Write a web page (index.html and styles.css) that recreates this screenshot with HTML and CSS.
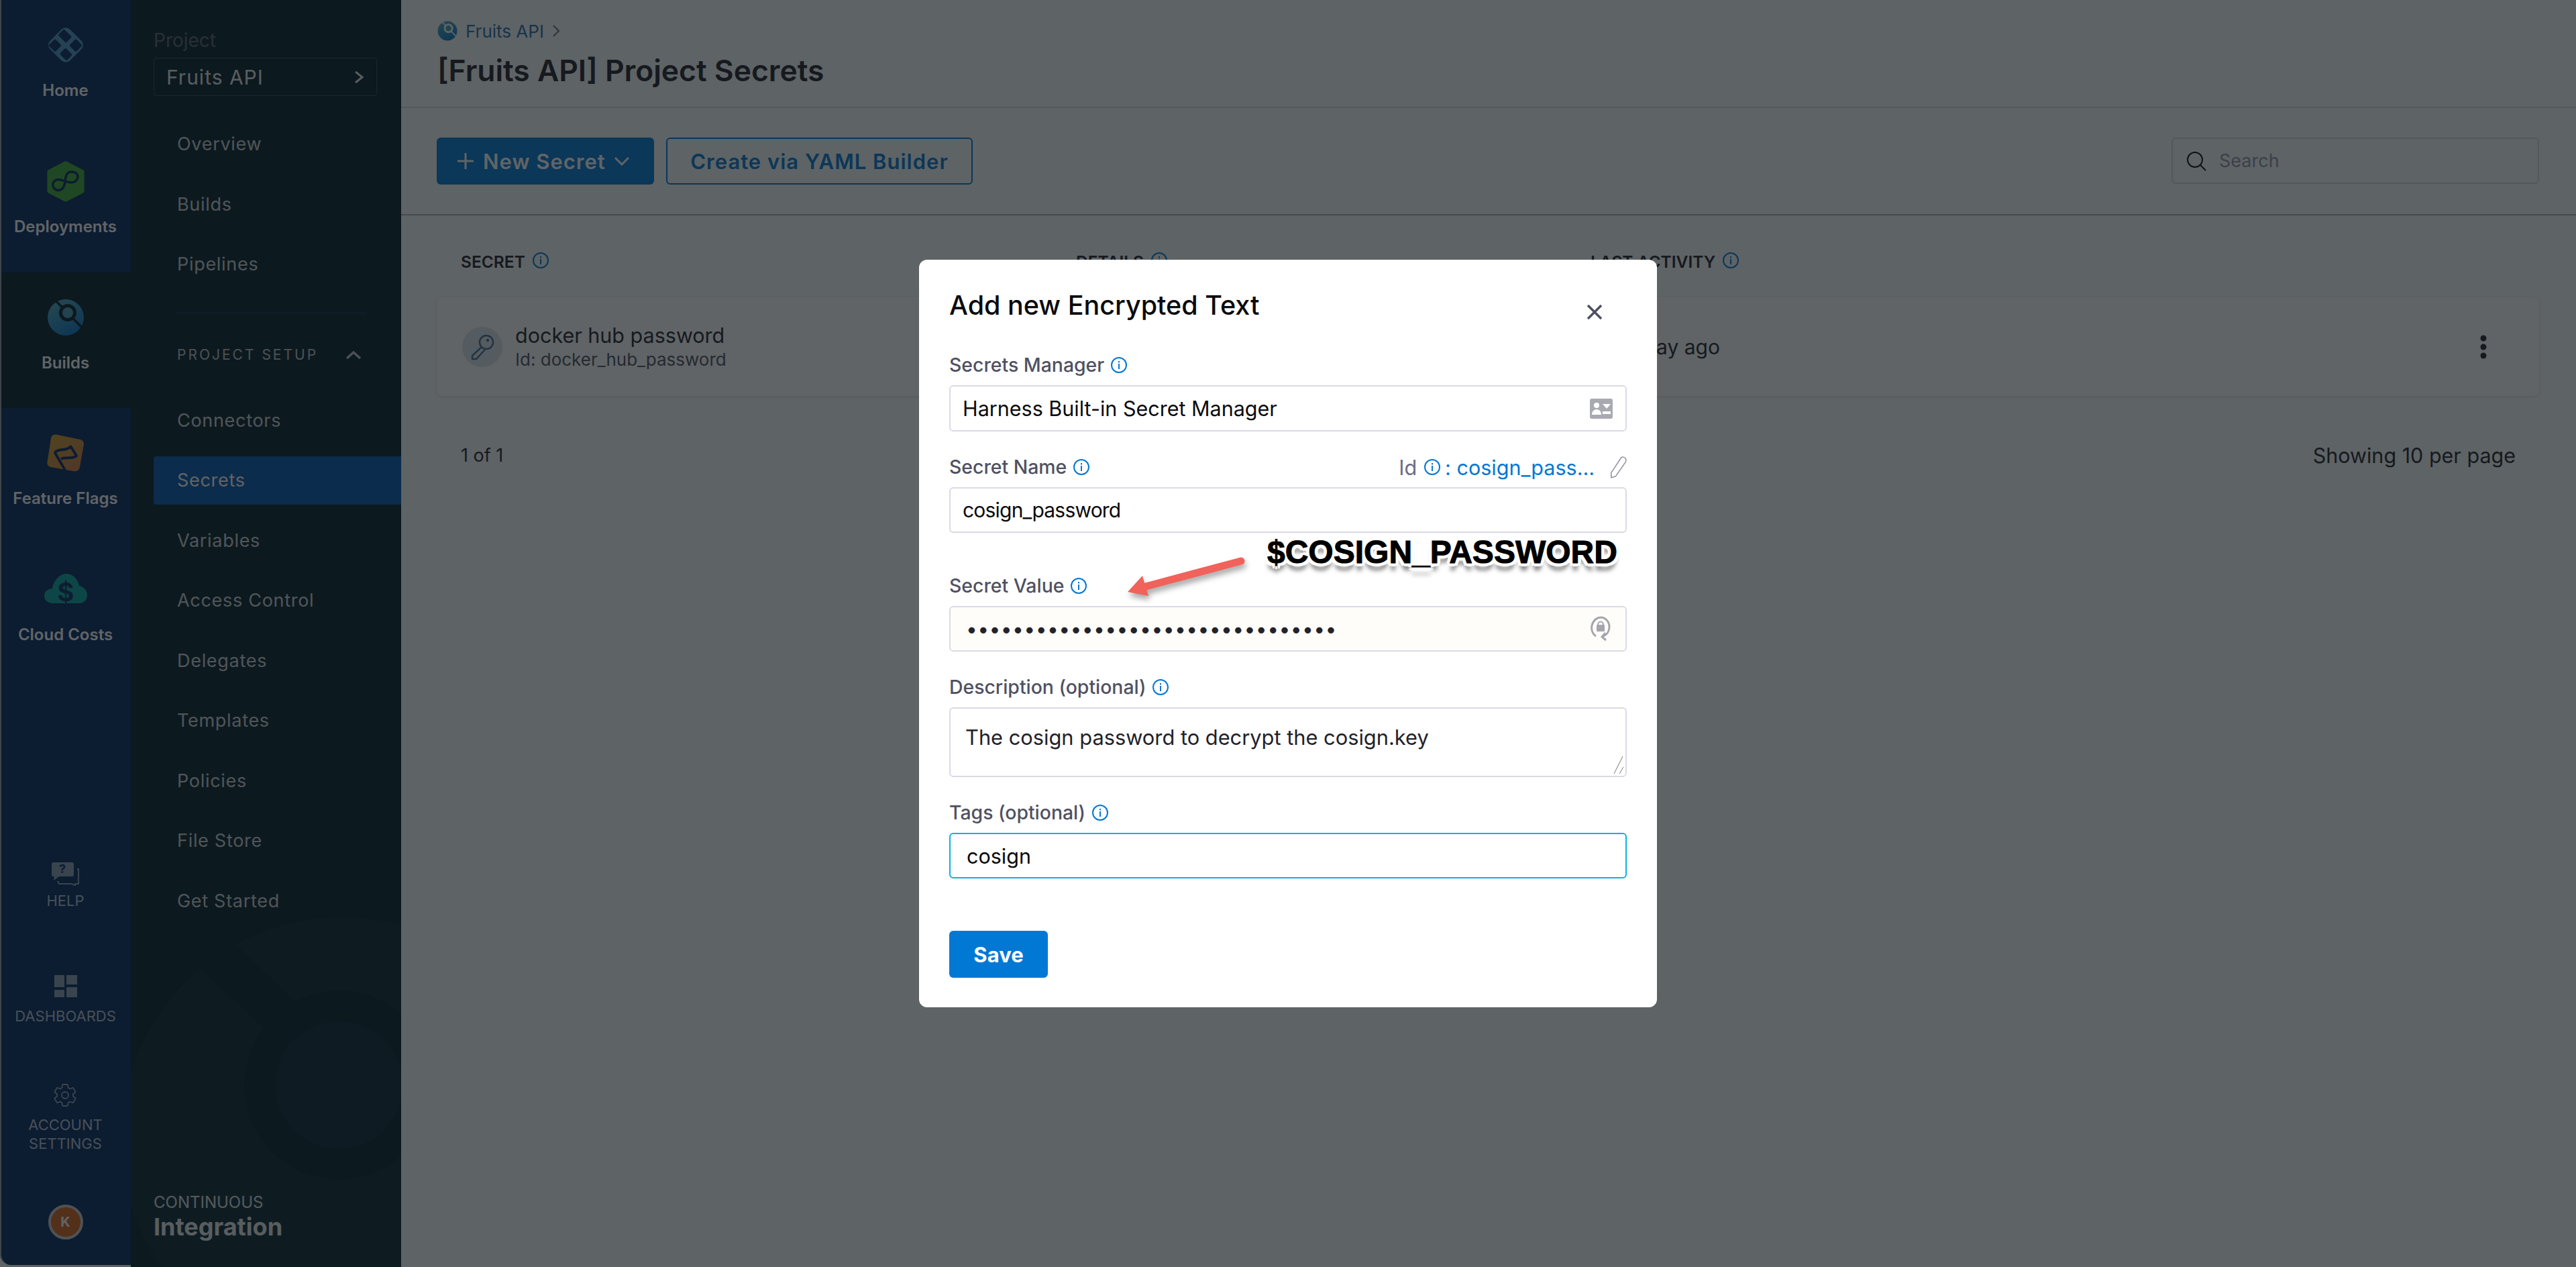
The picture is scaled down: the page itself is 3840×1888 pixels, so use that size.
FILE: index.html
```html
<!DOCTYPE html>
<html>
<head>
  <meta charset="UTF-8" />
  <title>[Fruits API] Project Secrets</title>
  <link rel="stylesheet" href="styles.css">
</head>
<body>
  <svg class="defs" width="0" height="0">
    <symbol id="info" viewBox="0 0 26 26">
      <circle cx="13" cy="13" r="11" fill="none" stroke="currentColor" stroke-width="2" />
      <rect x="12" y="11" width="2" height="8" fill="currentColor" />
      <rect x="12" y="7" width="2" height="2.4" fill="currentColor" />
    </symbol>
  </svg>
  <div class="app">
    <nav class="nav">
      <a class="nav-item">
        <svg class="nav-icon" width="66" height="66" viewBox="42 44 198 198">
          <rect x="78" y="80" width="126" height="126" rx="28" fill="#5098c8" transform="rotate(45 141 143)" />
          <g fill="#052760">
            <rect x="115" y="85" width="50" height="38" rx="6" transform="rotate(45 140 100)" />
            <rect x="72" y="124" width="42" height="42" rx="6" transform="rotate(45 93 145)" />
            <rect x="165" y="124" width="42" height="42" rx="6" transform="rotate(45 186 145)" />
            <rect x="118" y="165" width="44" height="38" rx="6" transform="rotate(45 140 187)" />
          </g>
        </svg>
        <span>Home</span>
      </a>
      <a class="nav-item">
        <svg class="nav-icon" width="56" height="60" viewBox="60 65 162 175">
          <path d="M141 75 L212 112 V195 L141 232 L70 195 V112 Z" fill="#3fa838" stroke="#3fa838" stroke-width="18" stroke-linejoin="round" />
          <path d="M110 145 C125 145 140 158 165 158 C182 158 193 145 193 133 C193 120 180 112 165 112 C150 112 142 125 140 140 C138 160 135 190 110 192 C95 192 85 180 85 168 C85 155 97 145 110 145 Z" fill="none" stroke="#052760" stroke-width="10" />
        </svg>
        <span>Deployments</span>
      </a>
      <a class="nav-item active">
        <svg class="nav-icon" width="56" height="56" viewBox="0 0 56 56">
          <defs>
            <linearGradient id="ci" x1="0" y1="0" x2="0.6" y2="1">
              <stop offset="0" stop-color="#58b0c0" />
              <stop offset="1" stop-color="#0a78c8" />
            </linearGradient>
          </defs>
          <circle cx="28" cy="28" r="27" fill="url(#ci)" />
          <path d="M13 3 L52 43" stroke="#051e2b" stroke-width="3.5" />
          <circle cx="31" cy="21" r="10.5" fill="#4a9cb8" stroke="#051e2b" stroke-width="5" />
        </svg>
        <span>Builds</span>
      </a>
      <a class="nav-item">
        <svg class="nav-icon" width="58" height="58" viewBox="50 45 180 180">
          <defs>
            <linearGradient id="ff" x1="0" y1="0" x2="1" y2="1">
              <stop offset="0" stop-color="#d0a024" />
              <stop offset="1" stop-color="#d0784c" />
            </linearGradient>
          </defs>
          <path d="M95 50 L205 72 C220 75 226 85 223 100 L205 200 C203 215 190 222 175 219 L70 200 C58 195 52 188 55 175 L72 65 C75 55 85 49 95 50 Z" fill="url(#ff)" />
          <path d="M143 225 L92 137 C90 130 93 127 100 125 C120 115 145 125 163 105 L190 148 C170 165 140 152 118 162" fill="none" stroke="#052760" stroke-width="12" stroke-linejoin="round" />
        </svg>
        <span>Feature Flags</span>
      </a>
      <a class="nav-item">
        <svg class="nav-icon" width="64" height="46" viewBox="0 0 64 46">
          <path d="M14 44 C4 44 0 38 0 33 C0 26 6 22 12 22 C14 9 24 0 33 0 C43 0 50 8 52 18 C59 19 64 25 64 32 C64 39 59 44 52 44 Z" fill="#08a4a0" />
          <text x="32" y="41" class="cloud-dollar">$</text>
        </svg>
        <span>Cloud Costs</span>
      </a>
      <div class="nav-bottom">
        <a class="nav-tool tool-help">
          <svg width="42" height="36" viewBox="0 0 42 36">
            <path d="M3 1 H32 C33 1 34 2 34 3 V20 C34 21 33 22 32 22 H12 L4 28 L5 22 H3 C2 22 1 21 1 20 V3 C1 2 2 1 3 1 Z" fill="#8aa0b8" />
            <path d="M39 11 H41 V33 H36 V36 L31 33 H12 L10 29" fill="none" stroke="#8aa0b8" stroke-width="2" />
            <text x="17" y="17" class="help-mark">?</text>
          </svg>
          <span>HELP</span>
        </a>
        <a class="nav-tool tool-dash">
          <span class="dash-grid"><i></i><i></i><i></i><i></i></span>
          <span>DASHBOARDS</span>
        </a>
        <a class="nav-tool tool-settings">
          <svg width="40" height="40" viewBox="0 0 24 24">
            <path d="M19.14 12.94c.04-.3.06-.61.06-.94 0-.32-.02-.64-.07-.94l2.03-1.58c.18-.14.23-.41.12-.61l-1.92-3.32c-.12-.22-.37-.29-.59-.22l-2.39.96c-.5-.38-1.03-.7-1.62-.94l-.36-2.54c-.04-.24-.24-.41-.48-.41h-3.84c-.24 0-.43.17-.47.41l-.36 2.54c-.59.24-1.13.57-1.62.94l-2.39-.96c-.22-.08-.47 0-.59.22L2.74 8.87c-.12.21-.08.47.12.61l2.03 1.58c-.05.3-.09.63-.09.94s.02.64.07.94l-2.03 1.58c-.18.14-.23.41-.12.61l1.92 3.32c.12.22.37.29.59.22l2.39-.96c.5.38 1.03.7 1.62.94l.36 2.54c.05.24.24.41.48.41h3.84c.24 0 .44-.17.47-.41l.36-2.54c.59-.24 1.13-.56 1.62-.94l2.39.96c.22.08.47 0 .59-.22l1.92-3.32c.12-.22.07-.47-.12-.61l-2.01-1.58z" fill="none" stroke="#8aa0b8" stroke-width="1.1" />
            <circle cx="12" cy="12" r="3" fill="none" stroke="#8aa0b8" stroke-width="1.1" />
          </svg>
          <span>ACCOUNT<br>SETTINGS</span>
        </a>
        <div class="avatar">K</div>
      </div>
    </nav>

    <aside class="side">
      <svg class="side-bg" width="403" height="530" viewBox="0 0 403 530">
        <defs>
          <clipPath id="disc"><circle cx="315" cy="339" r="330" /></clipPath>
        </defs>
        <g clip-path="url(#disc)">
          <rect width="403" height="530" fill="#0a2835" />
          <path d="M90 30 L260 190" stroke="#051e2b" stroke-width="62" />
          <circle cx="310" cy="259" r="118" fill="#092633" stroke="#051e2b" stroke-width="46" />
        </g>
      </svg>
      <div class="project-label">Project</div>
      <div class="project-picker">
        <span>Fruits API</span>
        <svg width="16" height="22" viewBox="0 0 16 22"><path d="M3 3 L13 11 L3 19" fill="none" stroke="#fff" stroke-width="3" /></svg>
      </div>
      <ul class="side-list first">
        <li>Overview</li>
        <li>Builds</li>
        <li>Pipelines</li>
      </ul>
      <div class="side-divider"></div>
      <div class="side-group">
        <span>PROJECT SETUP</span>
        <svg width="24" height="14" viewBox="0 0 24 14"><path d="M2 12 L12 3 L22 12" fill="none" stroke="#fff" stroke-width="3.5" /></svg>
      </div>
      <ul class="side-list">
        <li>Connectors</li>
        <li class="selected">Secrets</li>
        <li>Variables</li>
        <li>Access Control</li>
        <li>Delegates</li>
        <li>Templates</li>
        <li>Policies</li>
        <li>File Store</li>
        <li>Get Started</li>
      </ul>
      <div class="module-name">
        <div class="module-top">CONTINUOUS</div>
        <div class="module-main">Integration</div>
      </div>
    </aside>

    <main class="main">
      <header class="page-head">
        <div class="crumb">
          <svg width="30" height="30" viewBox="0 0 56 56">
            <circle cx="28" cy="28" r="27" fill="url(#ci)" />
            <path d="M13 3 L52 43" stroke="#fff" stroke-width="3.5" />
            <circle cx="31" cy="21" r="10.5" fill="#4a9cb8" stroke="#fff" stroke-width="5" />
          </svg>
          <span>Fruits API</span>
          <svg width="12" height="20" viewBox="0 0 12 20"><path d="M2 2 L10 10 L2 18" fill="none" stroke="#6b6d85" stroke-width="2" /></svg>
        </div>
        <h1>[Fruits API] Project Secrets</h1>
      </header>
      <div class="toolbar">
        <button class="btn-primary">
          <svg width="28" height="28" viewBox="0 0 28 28"><path d="M14 2 V26 M2 14 H26" stroke="#fff" stroke-width="3" /></svg>
          <span>New Secret</span>
          <svg width="24" height="14" viewBox="0 0 24 14"><path d="M2 2 L12 12 L22 2" fill="none" stroke="#fff" stroke-width="3" /></svg>
        </button>
        <button class="btn-outline">Create via YAML Builder</button>
        <div class="search">
          <svg width="32" height="32" viewBox="0 0 32 32">
            <circle cx="14" cy="14" r="11" fill="none" stroke="#0b0c12" stroke-width="2" />
            <path d="M22 22 L30 30" stroke="#0b0c12" stroke-width="2" />
          </svg>
          <span>Search</span>
        </div>
      </div>
      <section class="content">
        <div class="table-head">
          <div class="col-a">SECRET <svg class="info" width="26" height="26"><use href="#info" /></svg></div>
          <div class="col-b">DETAILS <svg class="info" width="26" height="26"><use href="#info" /></svg></div>
          <div class="col-c">LAST ACTIVITY <svg class="info" width="26" height="26"><use href="#info" /></svg></div>
        </div>
        <div class="row-card">
          <div class="key-badge">
            <svg width="36" height="40" viewBox="0 0 36 40">
              <circle cx="24" cy="13" r="10" fill="none" stroke="#4a6a90" stroke-width="2.4" />
              <circle cx="26" cy="10" r="2.2" fill="#4a6a90" />
              <path d="M17 20 L3 33 L3 38 L9 38 L22 24" fill="none" stroke="#4a6a90" stroke-width="2.4" />
            </svg>
          </div>
          <div class="row-name">
            <div class="row-title">docker hub password</div>
            <div class="row-id">Id: docker_hub_password</div>
          </div>
          <div class="row-activity">1 day ago</div>
          <svg class="row-menu" width="12" height="36" viewBox="0 0 12 36">
            <circle cx="6" cy="5" r="4.5" /><circle cx="6" cy="18" r="4.5" /><circle cx="6" cy="31" r="4.5" />
          </svg>
        </div>
        <div class="pager">
          <span>1 of 1</span>
          <span class="pager-size">Showing 10 per page</span>
        </div>
      </section>
    </main>
  </div>

  <div class="backdrop"></div>
  <div class="modal-wrap">
    <div class="modal">
      <div class="modal-head">
        <h2>Add new Encrypted Text</h2>
        <svg class="modal-close" width="26" height="26" viewBox="0 0 26 26"><path d="M3 3 L23 23 M23 3 L3 23" stroke="#4f5162" stroke-width="3.6" /></svg>
      </div>

      <div class="field-label">Secrets Manager <svg class="info-sm" width="26" height="26"><use href="#info" /></svg></div>
      <div class="input input-manager">
        <span>Harness Built-in Secret Manager</span>
        <svg width="36" height="32" viewBox="0 0 36 32">
          <rect x="1" y="1" width="34" height="30" rx="3" fill="#a9a9b2" />
          <circle cx="11" cy="11" r="4" fill="#fff" />
          <path d="M4 25 C4 19 8 17 11 17 C14 17 18 19 18 25 Z" fill="#fff" />
          <path d="M20 9 H32 L26 16 Z M20 20 H32 V24 H20 Z" fill="#fff" />
        </svg>
      </div>

      <div class="label-row">
        <div class="field-label">Secret Name <svg class="info-sm" width="26" height="26"><use href="#info" /></svg></div>
        <div class="id-edit">
          <span class="id-label">Id</span>
          <svg class="info-sm" width="26" height="26"><use href="#info" /></svg>
          <span class="id-value">: cosign_pass...</span>
          <svg class="id-pencil" width="26" height="34" viewBox="0 0 28 36">
            <path d="M19 3 C21 1 24 2 26 4 C27 6 27 8 26 10 L10 33 L3 35 L3 27 Z" fill="none" stroke="#8c8d9e" stroke-width="1.6" />
          </svg>
        </div>
      </div>
      <div class="input input-name"><span>cosign_password</span></div>

      <div class="field-label">Secret Value <svg class="info-sm" width="26" height="26"><use href="#info" /></svg></div>
      <div class="input input-secret">
        <span class="dots">••••••••••••••••••••••••••••••••</span>
        <svg width="30" height="38" viewBox="0 0 30 38">
          <path d="M8 30 C2 26 1 19 2 14 C4 6 10 2 15 2 C23 2 28 9 28 16 C28 23 24 28 19 30" fill="none" stroke="#a5a5ae" stroke-width="3" />
          <path d="M22 25 L17 31 L23 36" fill="none" stroke="#a5a5ae" stroke-width="3" />
          <rect x="9" y="13" width="12" height="10" rx="1" fill="#a5a5ae" />
          <path d="M11 13 C11 7 19 7 19 13" fill="none" stroke="#a5a5ae" stroke-width="2" />
        </svg>
      </div>

      <div class="field-label">Description (optional) <svg class="info-sm" width="26" height="26"><use href="#info" /></svg></div>
      <div class="input textarea">
        <span>The cosign password to decrypt the cosign.key</span>
        <svg class="resizer" width="16" height="28" viewBox="0 0 16 28"><path d="M14 1 L1 27 M15 17 L9 27" stroke="#777" stroke-width="1" /></svg>
      </div>

      <div class="field-label">Tags (optional) <svg class="info-sm" width="26" height="26"><use href="#info" /></svg></div>
      <div class="input input-tags"><span>cosign</span></div>

      <button class="btn-save">Save</button>

      <svg class="note-arrow" width="200" height="90" viewBox="0 0 200 90">
        <path d="M34 58 L180 19" stroke="#f0625a" stroke-width="11" stroke-linecap="round" />
        <path d="M11 65 L33 41 L38 58 L42 71 Z" fill="#f0625a" />
      </svg>
      <div class="note-text">$COSIGN_PASSWORD</div>
    </div>
  </div>
</body>
</html>
```

FILE: styles.css
```css
* {
  box-sizing: border-box;
}
html, body {
  margin: 0;
  height: 100%;
}
body {
  font-family: Inter, "Liberation Sans", sans-serif;
  background: #fafbfc;
  color: #22222a;
  overflow: hidden;
}
.defs {
  position: absolute;
}
.app {
  display: flex;
  height: 1888px;
}

/* left nav */
.nav {
  width: 195px;
  flex: none;
  display: flex;
  flex-direction: column;
  margin-bottom: 3px;
  background: #052760;
  border-left: 2px solid #9aa0a8;
  border-bottom-left-radius: 16px;
  color: #fff;
  position: relative;
  z-index: 1;
}
.nav-item {
  height: 202.8px;
  flex: none;
  display: flex;
  flex-direction: column;
  align-items: center;
  padding: 32px 2px 0 0;
  font-size: 24px;
  font-weight: 600;
}
.nav-item.active {
  background: #051e2b;
}
.nav-icon {
  height: 70px;
  margin-bottom: 18px;
}
.cloud-dollar {
  font: 700 38px Inter, sans-serif;
  fill: #0a2b63;
  text-anchor: middle;
}
.nav-bottom {
  margin-top: auto;
  padding: 0 2px 38px 0;
  display: flex;
  flex-direction: column;
  align-items: center;
}
.nav-tool {
  display: flex;
  flex-direction: column;
  align-items: center;
  text-align: center;
  font-size: 22px;
  line-height: 28px;
  color: #b5c3d2;
}
.tool-help {
  margin-bottom: 97px;
}
.tool-help svg {
  margin-bottom: 8px;
}
.help-mark {
  font: 700 18px Inter, sans-serif;
  fill: #052760;
  text-anchor: middle;
}
.tool-dash {
  margin-bottom: 84px;
}
.dash-grid {
  display: grid;
  grid-template-columns: 15px 16px;
  grid-template-rows: 14px 4px 15px;
  column-gap: 3px;
  margin-bottom: 14px;
}
.dash-grid i {
  background: #8aa0b8;
}
.dash-grid i:nth-child(1) {
  grid-row: 1 / span 2;
  height: 18px;
}
.dash-grid i:nth-child(2) {
  grid-row: 1;
}
.dash-grid i:nth-child(3) {
  grid-row: 3;
  align-self: end;
  height: 11px;
}
.dash-grid i:nth-child(4) {
  grid-row: 2 / span 2;
  height: 15px;
  align-self: end;
}
.tool-settings {
  margin-bottom: 77px;
}
.tool-settings svg {
  margin-bottom: 10px;
}
.avatar {
  width: 52px;
  height: 52px;
  border-radius: 50%;
  background: #d9641c;
  border: 4px solid #c9c9c9;
  display: flex;
  align-items: center;
  justify-content: center;
  font-size: 20px;
  font-weight: 700;
  color: #fff;
}

/* project sidebar */
.side {
  width: 403px;
  flex: none;
  background: #051e2b;
  color: #fff;
  position: relative;
  padding-top: 46px;
  overflow: hidden;
}
.side-bg {
  position: absolute;
  left: 0;
  bottom: 0;
}
.project-label {
  margin-left: 34px;
  font-size: 28px;
  line-height: 29px;
  opacity: 0.3;
}
.project-picker {
  margin: 11px 0 0 34px;
  width: 333px;
  height: 57px;
  border: 1px solid #3d4f5a;
  border-radius: 4px;
  padding: 0 18px;
  display: flex;
  align-items: center;
  justify-content: space-between;
  font-size: 30px;
  letter-spacing: 1px;
  opacity: 0.9;
}
.side-list {
  list-style: none;
  margin: 0;
  padding: 0;
  position: relative;
}
.side-list.first {
  margin-top: 27px;
}
.side-list li {
  margin-left: 34px;
  height: 89.5px;
  padding: 0 0 0 35px;
  display: flex;
  align-items: center;
  font-size: 27px;
  letter-spacing: 0.7px;
  opacity: 0.8;
  border-radius: 4px 0 0 4px;
}
.side-list li.selected {
  height: 72px;
  margin-top: 8.75px;
  margin-bottom: 8.75px;
  background: #0057b2;
  opacity: 1;
}
.side-divider {
  margin: 27px 0 0 69px;
  width: 282px;
  height: 1px;
  background: #1e3a58;
}
.side-group {
  margin: 36px 0 27px 69px;
  width: 275px;
  height: 52px;
  display: flex;
  align-items: center;
  justify-content: space-between;
  font-size: 21px;
  letter-spacing: 3px;
  opacity: 0.75;
}
.module-name {
  position: absolute;
  left: 34px;
  bottom: 38px;
}
.module-top {
  font-size: 24px;
  line-height: 28px;
  opacity: 0.85;
}
.module-main {
  font-size: 36px;
  line-height: 44px;
  font-weight: 700;
  opacity: 0.9;
}

/* main */
.main {
  flex: 1;
  min-width: 0;
}
.page-head {
  height: 161px;
  padding: 31px 0 0 54px;
  border-bottom: 2px solid #d9dae5;
}
.crumb {
  display: flex;
  align-items: center;
  gap: 12px;
  height: 30px;
  font-size: 26px;
  color: #2a6fa8;
}
h1 {
  margin: 18px 0 0;
  font-size: 44.4px;
  line-height: 52px;
  font-weight: 600;
  color: #22222a;
}
.toolbar {
  height: 160px;
  padding: 44px 55px 0 53px;
  display: flex;
  align-items: flex-start;
  border-bottom: 2px solid #b0b1c3;
}
button {
  font-family: inherit;
  cursor: pointer;
}
.btn-primary {
  width: 324px;
  height: 70px;
  background: #0278d5;
  border: none;
  border-radius: 6px;
  color: #fff;
  font-size: 31px;
  font-weight: 600;
  letter-spacing: 1px;
  display: flex;
  align-items: center;
  padding: 0 0 0 29px;
  gap: 12px;
}
.btn-outline {
  width: 457px;
  height: 70px;
  margin-left: 18px;
  background: transparent;
  border: 2px solid #0278d5;
  border-radius: 6px;
  color: #0278d5;
  font-size: 31px;
  font-weight: 600;
  letter-spacing: 1px;
}
.search {
  margin-left: auto;
  width: 548px;
  height: 69px;
  border: 2px solid #d9dae5;
  border-radius: 6px;
  display: flex;
  align-items: center;
  padding-left: 19px;
  gap: 18px;
  font-size: 27px;
  color: #9293ab;
}
.content {
  padding: 0 55px 0 53px;
}
.table-head {
  display: flex;
  align-items: center;
  height: 122px;
  padding: 16px 0 0 36px;
  font-size: 24.5px;
  font-weight: 600;
  color: #22222a;
}
.table-head .info {
  color: #0278d5;
  vertical-align: -2px;
  margin-left: 4px;
}
.col-a {
  width: 917px;
}
.col-b {
  width: 767px;
}
.row-card {
  height: 147px;
  background: #fff;
  border-radius: 8px;
  box-shadow: 0 1px 4px rgba(96, 97, 112, 0.2);
  display: flex;
  align-items: center;
  padding-left: 38px;
}
.key-badge {
  width: 60px;
  height: 60px;
  border-radius: 50%;
  background: #dfe6ef;
  display: flex;
  align-items: center;
  justify-content: center;
  flex: none;
}
.row-name {
  width: 836px;
  margin-left: 19px;
  flex: none;
}
.row-title {
  font-size: 30.5px;
  line-height: 38px;
  color: #22222a;
}
.row-id {
  font-size: 26px;
  line-height: 34px;
  color: #4f5162;
}
.row-activity {
  width: 960px;
  flex: none;
  text-align: right;
  font-size: 30px;
  color: #22222a;
}
.row-menu {
  margin-left: auto;
  margin-right: 77px;
  fill: #22222a;
}
.pager {
  display: flex;
  justify-content: space-between;
  align-items: center;
  padding: 69px 35px 0 36px;
  font-size: 27px;
  line-height: 40px;
  color: #22222a;
}
.pager-size {
  font-size: 30.5px;
}

/* dialog */
.backdrop {
  position: fixed;
  inset: 0;
  z-index: 5;
  background: rgba(16, 22, 26, 0.665);
}
.modal-wrap {
  position: fixed;
  inset: 0;
  z-index: 6;
  display: flex;
  align-items: center;
  justify-content: center;
}
.modal {
  position: relative;
  width: 1100px;
  height: 1114px;
  background: #fff;
  border-radius: 12px;
  padding: 44px 45px 0 45px;
}
.modal-head {
  display: flex;
  justify-content: space-between;
  height: 96px;
}
h2 {
  margin: 0;
  font-size: 39.5px;
  line-height: 48px;
  font-weight: 500;
  color: #0b0b0d;
}
.modal-close {
  margin: 21px 35px 0 0;
}
.field-label {
  font-size: 28.4px;
  line-height: 34px;
  font-weight: 500;
  color: #4f5162;
  display: flex;
  align-items: center;
  gap: 9px;
  margin-bottom: 13px;
}
.info-sm {
  color: #0278d5;
}
.input {
  height: 69px;
  background: #fff;
  border: 2px solid #d9dae5;
  border-radius: 6px;
  display: flex;
  align-items: center;
  justify-content: space-between;
  padding: 0 18px 0 18px;
  font-size: 30.5px;
  color: #0b0b0d;
  margin-bottom: 35px;
}
.input-manager {
  margin-bottom: 36px;
}
.label-row {
  display: flex;
  justify-content: space-between;
  align-items: center;
  height: 47px;
}
.label-row .field-label {
  margin-bottom: 13px;
}
.id-edit {
  display: flex;
  align-items: center;
  height: 34px;
  margin-bottom: 13px;
  font-size: 30.5px;
}
.id-label {
  color: #6b6d85;
  margin-right: 10px;
}
.id-value {
  color: #0278d5;
  margin: 0 22px 0 6px;
}
.input-name {
  height: 68px;
  font-size: 30px;
  letter-spacing: -0.8px;
  margin-bottom: 62px;
}
.input-secret {
  height: 68px;
  background: #fffdfa;
  padding: 0 22px 0 23px;
  margin-bottom: 36px;
}
.dots {
  letter-spacing: 0.4px;
  font-size: 30px;
  color: #22222a;
}
.textarea {
  height: 104px;
  align-items: flex-start;
  padding: 24px 22px 0 22px;
  font-size: 30.8px;
  color: #22222a;
  position: relative;
  margin-bottom: 36px;
}
.resizer {
  position: absolute;
  right: 2px;
  bottom: 2px;
}
.input-tags {
  height: 68px;
  border: 2px solid #0bb1e4;
  padding-left: 24px;
  margin-bottom: 78px;
}
.btn-save {
  display: block;
  width: 147px;
  height: 70px;
  background: #0278d5;
  border: none;
  border-radius: 6px;
  color: #fff;
  font-size: 31px;
  font-weight: 700;
}

/* screenshot annotation drawn over the dialog */
.note-arrow {
  position: absolute;
  left: 300px;
  top: 430px;
  filter: drop-shadow(2px 6px 4px rgba(0, 0, 0, 0.35));
}
.note-text {
  position: absolute;
  left: 519px;
  top: 408px;
  font-family: "Liberation Sans", Arial, sans-serif;
  font-size: 48px;
  line-height: 56px;
  font-weight: 700;
  color: #000;
  white-space: nowrap;
  -webkit-text-stroke: 1px #000;
  text-shadow: 5px 0 0 #fff, -5px 0 0 #fff, 0 5px 0 #fff, 0 -5px 0 #fff,
    4px 4px 0 #fff, -4px 4px 0 #fff, 4px -4px 0 #fff, -4px -4px 0 #fff,
    0 11px 6px rgba(0, 0, 0, 0.5);
}
```
